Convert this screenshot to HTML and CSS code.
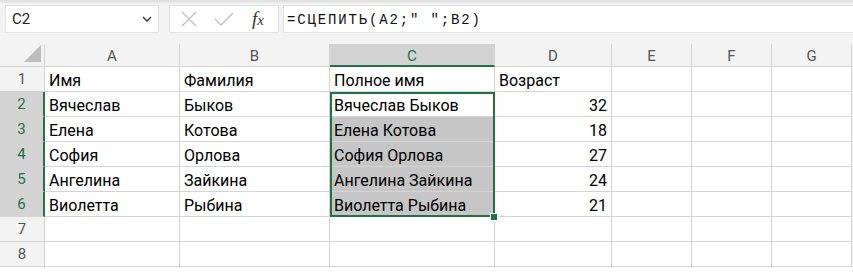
FILE: index.html
```html
<!DOCTYPE html>
<html lang="ru">

<head>
    <title>Книга1 - Excel</title>
    <meta charset="utf-8" />
    <link rel="stylesheet" href="styles.css">
</head>

<body>
    <div class="formula-bar">
        <div class="name-box">
            <span>C2</span>
            <svg class="chevron" width="10" height="6" viewBox="0 0 10 6"><path d="M1 1l4 4 4-4" fill="none" stroke="#333" stroke-width="1.4" /></svg>
        </div>
        <div class="fx-box">
            <svg width="16" height="16" viewBox="0 0 16 16"><path d="M1 1l14 14M15 1L1 15" stroke="#bdbdbd" stroke-width="1.3" /></svg>
            <svg width="20" height="14" viewBox="0 0 20 14"><path d="M1 7l6 6L19 1" fill="none" stroke="#bdbdbd" stroke-width="1.3" /></svg>
            <span class="fx"><i>f</i><i class="fx-x">x</i></span>
        </div>
        <div class="formula-input">=СЦЕПИТЬ(A2;" ";B2)</div>
    </div>

    <div class="sheet">
        <div class="grid">
            <div class="corner"><span class="select-all"></span></div>
            <div class="col-head">A</div>
            <div class="col-head">B</div>
            <div class="col-head active">C</div>
            <div class="col-head">D</div>
            <div class="col-head">E</div>
            <div class="col-head">F</div>
            <div class="col-head">G</div>

            <div class="row-head">1</div>
            <div class="cell">Имя</div>
            <div class="cell">Фамилия</div>
            <div class="cell">Полное имя</div>
            <div class="cell">Возраст</div>
            <div class="cell"></div>
            <div class="cell"></div>
            <div class="cell"></div>

            <div class="row-head active">2</div>
            <div class="cell">Вячеслав</div>
            <div class="cell">Быков</div>
            <div class="cell">Вячеслав Быков</div>
            <div class="cell num">32</div>
            <div class="cell"></div>
            <div class="cell"></div>
            <div class="cell"></div>

            <div class="row-head active">3</div>
            <div class="cell">Елена</div>
            <div class="cell">Котова</div>
            <div class="cell shaded">Елена Котова</div>
            <div class="cell num">18</div>
            <div class="cell"></div>
            <div class="cell"></div>
            <div class="cell"></div>

            <div class="row-head active">4</div>
            <div class="cell">София</div>
            <div class="cell">Орлова</div>
            <div class="cell shaded">София Орлова</div>
            <div class="cell num">27</div>
            <div class="cell"></div>
            <div class="cell"></div>
            <div class="cell"></div>

            <div class="row-head active">5</div>
            <div class="cell">Ангелина</div>
            <div class="cell">Зайкина</div>
            <div class="cell shaded">Ангелина Зайкина</div>
            <div class="cell num">24</div>
            <div class="cell"></div>
            <div class="cell"></div>
            <div class="cell"></div>

            <div class="row-head active">6</div>
            <div class="cell">Виолетта</div>
            <div class="cell">Рыбина</div>
            <div class="cell shaded">Виолетта Рыбина</div>
            <div class="cell num">21</div>
            <div class="cell"></div>
            <div class="cell"></div>
            <div class="cell"></div>

            <div class="row-head">7</div>
            <div class="cell"></div>
            <div class="cell"></div>
            <div class="cell"></div>
            <div class="cell"></div>
            <div class="cell"></div>
            <div class="cell"></div>
            <div class="cell"></div>

            <div class="row-head">8</div>
            <div class="cell"></div>
            <div class="cell"></div>
            <div class="cell"></div>
            <div class="cell"></div>
            <div class="cell"></div>
            <div class="cell"></div>
            <div class="cell"></div>
        </div>
        <div class="selection"><span class="fill-handle"></span></div>
    </div>
</body>

</html>
```

FILE: styles.css
```css
html,
body {
    margin: 0;
    background-color: #fff;
    font-family: Roboto, "Liberation Sans", sans-serif;
    overflow: hidden;
}

.formula-bar {
    display: flex;
    height: 44px;
    box-sizing: border-box;
    padding: 5px 0 0 5px;
    background: linear-gradient(#dcdcdc 0, #ececec 3px, #f3f3f3 4px);
}

.name-box,
.fx-box,
.formula-input {
    height: 28px;
    box-sizing: border-box;
    background-color: #fff;
    border: 1px solid #e3e3e3;
}

.name-box {
    width: 154px;
    display: flex;
    align-items: center;
    justify-content: space-between;
    padding: 0 6px 0 6px;
    font-size: 15px;
    color: #222;
}

.fx-box {
    width: 110px;
    margin-left: 10px;
    display: flex;
    align-items: center;
    padding: 0 0 0 11px;
    gap: 17px;
}

.fx {
    font-family: "Liberation Serif", serif;
    font-size: 19px;
    color: #333;
    margin-left: 1px;
}

.fx-x {
    font-size: 15px;
}

.formula-input {
    flex: 1;
    margin: 0 -2px 0 4px;
    padding: 1px 0 0 3px;
    font-family: "Liberation Mono", monospace;
    font-size: 14px;
    letter-spacing: 1.85px;
    line-height: 26px;
    color: #111;
}

.sheet {
    position: relative;
}

.grid {
    display: grid;
    grid-template-columns: 45px 135px 150px 165px 117px 80px 80px 80px;
    grid-template-rows: 23px;
    grid-auto-rows: 25px;
    background-color: #f3f3f3;
}

.grid > div {
    box-sizing: border-box;
    border-right: 1px solid #d4d4d4;
    border-bottom: 1px solid #d4d4d4;
    overflow: hidden;
    white-space: nowrap;
}

.corner {
    position: relative;
}

.select-all {
    position: absolute;
    right: 3px;
    bottom: 4px;
    width: 0;
    height: 0;
    border-left: 17px solid transparent;
    border-bottom: 17px solid #bdbdbd;
}

.col-head {
    text-align: center;
    font-size: 15px;
    line-height: 25px;
    color: #555;
}

.col-head.active {
    background-color: #d3d3d3;
    color: #217346;
    border-bottom: 2px solid #217346;
}

.row-head {
    text-align: center;
    font-size: 15px;
    line-height: 25px;
    color: #555;
}

.row-head.active {
    background-color: #d3d3d3;
    color: #217346;
    border-right: 2px solid #217346;
}

.cell {
    background-color: #fff;
    padding: 3px 4px 0 4px;
    font-size: 16px;
    line-height: 22px;
    color: #000;
}

.cell.num {
    text-align: right;
}

.cell.shaded {
    background-color: #c6c6c6;
}

.selection {
    position: absolute;
    left: 330px;
    top: 48px;
    width: 165px;
    height: 125px;
    box-sizing: border-box;
    border: 2px solid #217346;
    pointer-events: none;
}

.fill-handle {
    position: absolute;
    right: -4px;
    bottom: -5px;
    width: 6px;
    height: 6px;
    background-color: #217346;
    box-shadow: 0 0 0 1px #fff;
}
```
